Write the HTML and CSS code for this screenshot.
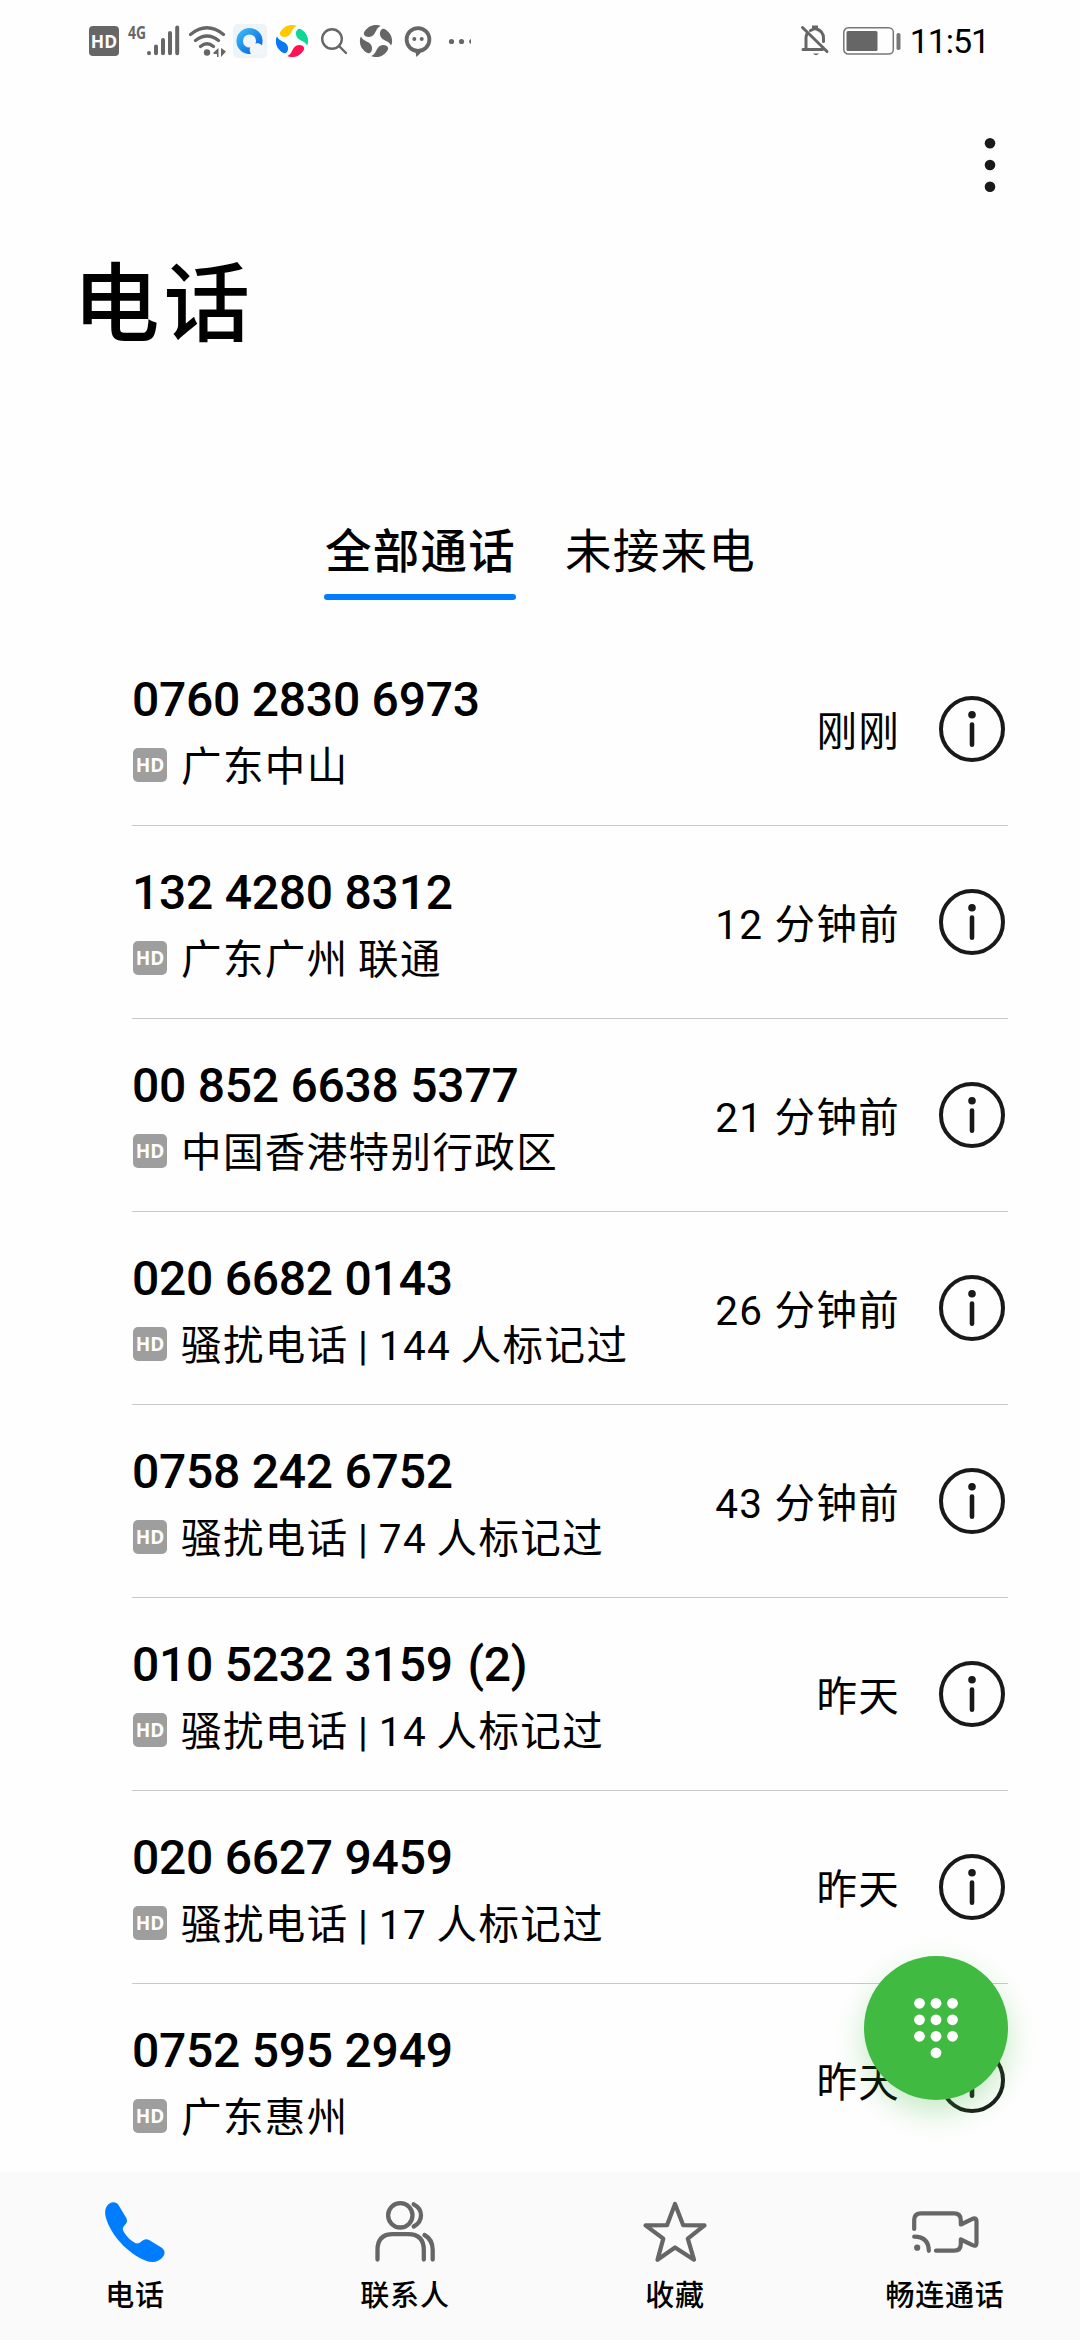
FILE: index.html
```html
<!DOCTYPE html>
<html lang="zh-CN">
<head>
  <meta charset="UTF-8" />
  <meta name="viewport" content="width=device-width, initial-scale=1.0"/>
  <title>电话</title>
  <link rel="stylesheet" href="styles.css">
</head>
<body>
  <!-- Shared icons -->
  <svg class="sprite" width="0" height="0">
    <symbol id="info" viewBox="0 0 72 72">
      <circle cx="36" cy="36" r="31" fill="none" stroke="#191919" stroke-width="4"/>
      <circle cx="36" cy="21.7" r="3.8" fill="#191919"/>
      <path d="M36 31.5v20.3" stroke="#191919" stroke-width="4.6" stroke-linecap="round"/>
    </symbol>
    <path id="petal" d="M5.500 7.500C8.500 3 12.500 .9 16.800 .9C18.800 .9 20.500 1.200 21.600 2C17.800 3.800 17.500 6.500 15.300 10C13.500 12.800 9.500 14 6.600 12.300C4.600 11.200 4.400 9.200 5.500 7.500Z"/>
  </svg>

  <div class="phone">
    <header class="status-bar">
      <div class="status-left">
        <span class="cell"><span class="hd-dark">HD</span></span>
        <span class="cell signal">
          <span class="net">4G</span>
          <svg width="34" height="34" viewBox="0 0 34 34" stroke="#666" stroke-width="4" stroke-linecap="round">
            <path d="M3 29v.2M10 22.500v6.700M17 16v13.200M24 9v20.200M31.200 3.500v25.700"/>
          </svg>
        </span>
        <span class="cell">
          <svg width="40" height="34" viewBox="0 0 40 34" fill="none" stroke="#666" stroke-width="3.200" stroke-linecap="round">
            <path d="M2.500 10.500Q19 -3 35.500 10.500M7.500 16.500Q19 7.500 30.500 16.500M12.500 22.500Q19 17 25.500 22.500"/>
            <circle cx="19" cy="28.500" r="3.200" fill="#666" stroke="none"/>
            <path d="M30.500 24v9h-1.500v-3h-3.500v-1.500zM33 24v9l5-5.500z" fill="#666" stroke="none"/>
          </svg>
        </span>
        <span class="cell">
          <svg width="34" height="34" viewBox="0 0 34 34">
            <defs>
              <linearGradient id="qblue" x1="0" y1="0" x2="1" y2="1">
                <stop offset="0" stop-color="#38b5f5"/>
                <stop offset="1" stop-color="#0865dc"/>
              </linearGradient>
            </defs>
            <rect width="34" height="34" rx="5" fill="#eef3f7"/>
            <circle cx="16.500" cy="17" r="9.800" fill="#f1f6fb" stroke="url(#qblue)" stroke-width="6.500"/>
            <path d="M20 31a5.300 5.300 0 0 1 .5-10a5.500 5.500 0 0 1 9 1.500a4.200 4.200 0 0 1 0 8.500z" fill="#f1f6fb"/>
          </svg>
        </span>
        <span class="cell">
          <svg width="34" height="34" viewBox="0 0 34 34">
            <use href="#petal" fill="#ffc800"/>
            <use href="#petal" fill="#0fd896" transform="rotate(90 17 17)"/>
            <use href="#petal" fill="#ff1155" transform="rotate(180 17 17)"/>
            <use href="#petal" fill="#0878f5" transform="rotate(270 17 17)"/>
          </svg>
        </span>
        <span class="cell">
          <svg width="34" height="34" viewBox="0 0 34 34" fill="none" stroke="#666" stroke-width="2.400" stroke-linecap="round">
            <circle cx="15" cy="15" r="9.800"/>
            <path d="M22.500 22.500l6.500 6.500"/>
          </svg>
        </span>
        <span class="cell">
          <svg width="34" height="34" viewBox="0 0 34 34" fill="#666">
            <use href="#petal"/>
            <use href="#petal" transform="rotate(90 17 17)"/>
            <use href="#petal" transform="rotate(180 17 17)"/>
            <use href="#petal" transform="rotate(270 17 17)"/>
          </svg>
        </span>
        <span class="cell">
          <svg width="34" height="34" viewBox="0 0 34 34" fill="#666">
            <circle cx="17" cy="15.500" r="11.400" fill="none" stroke="#666" stroke-width="3.800"/>
            <path d="M14.500 27l.8 6q4-2.500 5.500-6.500z"/>
            <circle cx="13.300" cy="15" r="2"/>
            <circle cx="20.700" cy="15" r="2"/>
          </svg>
        </span>
        <span class="cell">
          <svg width="24" height="34" viewBox="0 0 24 34" fill="#666">
            <circle cx="3.500" cy="17.500" r="2.600"/>
            <circle cx="13.500" cy="17.500" r="2.600"/>
            <path d="M23 15a2.600 2.600 0 0 0 0 5z"/>
          </svg>
        </span>
      </div>
      <div class="status-right">
        <svg width="32" height="34" viewBox="0 0 32 34" fill="none" stroke="#666" stroke-width="3" stroke-linecap="round">
          <path d="M3.500 3.500L28 27.500"/>
          <path d="M4 25.500h19.500M7 25V13.500q0-1.500 1-3.500M11.500 6.500q2-1 3-1.500v-2h3v2q7 2 7 9.500v3"/>
          <path d="M14 29.500h6q-3 3.500-6 0z" fill="#666" stroke="none"/>
        </svg>
        <svg class="battery" width="58" height="28" viewBox="0 0 58 28">
          <rect x=".8" y=".8" width="49.500" height="26.200" rx="4.500" fill="none" stroke="#777" stroke-width="1.500"/>
          <rect x="3.500" y="4" width="31" height="20" rx="1.500" fill="#666"/>
          <rect x="53.500" y="6" width="4" height="17" rx="1.800" fill="#777"/>
        </svg>
        <span class="clock">11:51</span>
      </div>
    </header>

    <div class="toolbar">
      <svg width="12" height="56" viewBox="0 0 12 56" fill="#191919">
        <circle cx="6" cy="6.300" r="5.300"/>
        <circle cx="6" cy="28" r="5.300"/>
        <circle cx="6" cy="49.700" r="5.300"/>
      </svg>
    </div>

    <h1>电话</h1>

    <div class="tabs">
      <div class="tab active">全部通话</div>
      <div class="tab">未接来电</div>
    </div>

    <main class="call-list">
      <div class="call">
        <div class="caller">
          <div class="number">0760 2830 6973</div>
          <div class="detail"><span class="hd">HD</span>广东中山</div>
        </div>
        <div class="time">刚刚</div>
        <svg class="info"><use href="#info"/></svg>
      </div>
      <div class="call">
        <div class="caller">
          <div class="number">132 4280 8312</div>
          <div class="detail"><span class="hd">HD</span>广东广州 联通</div>
        </div>
        <div class="time">12 分钟前</div>
        <svg class="info"><use href="#info"/></svg>
      </div>
      <div class="call">
        <div class="caller">
          <div class="number">00 852 6638 5377</div>
          <div class="detail"><span class="hd">HD</span>中国香港特别行政区</div>
        </div>
        <div class="time">21 分钟前</div>
        <svg class="info"><use href="#info"/></svg>
      </div>
      <div class="call">
        <div class="caller">
          <div class="number">020 6682 0143</div>
          <div class="detail"><span class="hd">HD</span>骚扰电话 | 144 人标记过</div>
        </div>
        <div class="time">26 分钟前</div>
        <svg class="info"><use href="#info"/></svg>
      </div>
      <div class="call">
        <div class="caller">
          <div class="number">0758 242 6752</div>
          <div class="detail"><span class="hd">HD</span>骚扰电话 | 74 人标记过</div>
        </div>
        <div class="time">43 分钟前</div>
        <svg class="info"><use href="#info"/></svg>
      </div>
      <div class="call">
        <div class="caller">
          <div class="number">010 5232 3159 <span class="count">(2)</span></div>
          <div class="detail"><span class="hd">HD</span>骚扰电话 | 14 人标记过</div>
        </div>
        <div class="time">昨天</div>
        <svg class="info"><use href="#info"/></svg>
      </div>
      <div class="call">
        <div class="caller">
          <div class="number">020 6627 9459</div>
          <div class="detail"><span class="hd">HD</span>骚扰电话 | 17 人标记过</div>
        </div>
        <div class="time">昨天</div>
        <svg class="info"><use href="#info"/></svg>
      </div>
      <div class="call">
        <div class="caller">
          <div class="number">0752 595 2949</div>
          <div class="detail"><span class="hd">HD</span>广东惠州</div>
        </div>
        <div class="time">昨天</div>
        <svg class="info"><use href="#info"/></svg>
      </div>
    </main>

    <!-- Dial pad button -->
    <button class="fab">
      <svg width="144" height="144" viewBox="0 0 144 144" fill="#fff">
        <circle cx="55.500" cy="47.300" r="5.400"/>
        <circle cx="72" cy="47.300" r="5.400"/>
        <circle cx="88.500" cy="47.300" r="5.400"/>
        <circle cx="55.500" cy="63.800" r="5.400"/>
        <circle cx="72" cy="63.800" r="5.400"/>
        <circle cx="88.500" cy="63.800" r="5.400"/>
        <circle cx="55.500" cy="80.300" r="5.400"/>
        <circle cx="72" cy="80.300" r="5.400"/>
        <circle cx="88.500" cy="80.300" r="5.400"/>
        <circle cx="72" cy="96.800" r="5.400"/>
      </svg>
    </button>

    <nav class="bottom-nav">
      <div class="nav-item">
        <svg width="72" height="72" viewBox="0 0 72 72" fill="#007dff">
          <path d="M10.500 7.500C13.500 5.500 17.500 5.700 19.500 9L27.300 22C29 25 27.500 27.500 25 30C23.300 31.700 23.500 34 25 36.300C28 41 31.500 44.500 35.700 46.800C38 48 40 47.500 42 45.800C44.500 43.300 47.500 42.500 50 44L62 51.200C65.800 53.500 66.500 57 64.500 60C60.500 66 53.500 67.500 47 64.800C28 57 12 39 7 22C5.300 16 6 10.500 10.500 7.500Z"/>
        </svg>
        <span>电话</span>
      </div>
      <div class="nav-item">
        <svg width="72" height="72" viewBox="0 0 72 72" fill="none" stroke="#666" stroke-width="4.300" stroke-linecap="round">
          <circle cx="31.300" cy="19.300" r="12.200"/>
          <path d="M44.700 8.300Q52 12 52 19.300T44.700 30.500"/>
          <path d="M8.500 63.500V54Q8.500 38.200 24 38.200H39Q54.800 38.200 54.800 54V63.500M55.500 39Q63.700 43.500 63.700 54V63.500"/>
        </svg>
        <span>联系人</span>
      </div>
      <div class="nav-item">
        <svg width="72" height="72" viewBox="0 0 72 72" fill="none" stroke="#666" stroke-width="4.200" stroke-linejoin="round">
          <path d="M36 8L44.200 29.200L65.500 29.400L48.800 42.600L55 63.700L36 51.500L18.500 63.700L24.300 42.600L6.500 29.400L28 29.200Z"/>
        </svg>
        <span>收藏</span>
      </div>
      <div class="nav-item">
        <svg width="72" height="72" viewBox="0 0 72 72" fill="none" stroke="#666" stroke-width="4.200" stroke-linecap="round" stroke-linejoin="round">
          <path d="M5.200 33V24Q5.200 17.300 12 17.300H45Q51.800 17.300 51.800 24V28.500L63.500 22.800Q67.500 21.300 67.500 25V47Q67.500 51 63.500 49.200L51.800 43.500V48Q51.800 54.700 45 54.700H27"/>
          <path d="M5.200 40.700Q19.500 40.700 19.800 54.800"/>
          <circle cx="8.200" cy="51.700" r="3.100" fill="#666" stroke="none"/>
        </svg>
        <span>畅连通话</span>
      </div>
    </nav>
  </div>
</body>
</html>
```
FILE: styles.css
```css
* {
  box-sizing: border-box;
  margin: 0;
  padding: 0;
}

body {
  font-family: Roboto, 'Noto Sans CJK SC', sans-serif;
  background: #fefefe;
  color: #000;
}

svg {
  display: block;
  flex-shrink: 0;
}

.sprite {
  position: absolute;
}

.phone {
  position: relative;
  display: flex;
  flex-direction: column;
  width: 1080px;
  height: 2340px;
  overflow: hidden;
}

/* status bar */
.status-bar {
  display: flex;
  justify-content: space-between;
  align-items: center;
  height: 82px;
  padding: 0 91px 0 83px;
}

.status-left,
.status-right {
  display: flex;
  align-items: center;
}

.cell {
  display: flex;
  justify-content: center;
  align-items: center;
  width: 42px;
}

.hd-dark,
.hd {
  display: flex;
  justify-content: center;
  align-items: center;
  color: #fff;
  font-family: 'Open Sans', sans-serif;
  font-weight: 700;
  letter-spacing: 0;
}

.hd-dark {
  width: 30px;
  height: 30px;
  border-radius: 4px;
  background: #666;
  font-size: 17.5px;
}

.signal {
  width: 62px;
  align-items: flex-start;
  justify-content: flex-end;
  padding-right: 7px;
}

.net {
  color: #666;
  font-family: 'Open Sans', sans-serif;
  font-size: 18.5px;
  font-weight: 700;
  line-height: 15px;
  transform: scaleX(0.75);
  transform-origin: right;
}

.battery {
  margin: 0 9px 0 12px;
}

.clock {
  font-size: 34px;
  letter-spacing: -1.1px;
  line-height: 40px;
}

/* header */
.toolbar {
  display: flex;
  justify-content: flex-end;
  align-items: center;
  height: 166px;
  padding-right: 84px;
}

h1 {
  height: 110px;
  padding: 3px 0 0 73px;
  font-size: 86.5px;
  font-weight: 500;
  letter-spacing: 4px;
  line-height: 110px;
}

.tabs {
  display: flex;
  justify-content: center;
  gap: 48px;
  height: 102px;
  margin-top: 142px;
}

.tab {
  padding-left: 1px;
  font-size: 46.5px;
  letter-spacing: 1.25px;
  line-height: 104px;
}

.tab.active {
  font-weight: 500;
}

.tab.active::after {
  content: '';
  display: block;
  height: 6px;
  margin: -10px 0 0 -1px;
  border-radius: 3px;
  background: #007dff;
}

/* call log */
.call-list {
  flex: 1;
  margin-top: 31px;
  padding: 0 72px 0 132px;
  overflow: hidden;
}

.call {
  display: flex;
  align-items: center;
  height: 193px;
  border-bottom: 1px solid #c9c9c9;
}

.caller {
  flex: 1;
  padding-top: 7px;
}

.number {
  font-size: 48px;
  font-weight: 500;
  letter-spacing: -0.25px;
  line-height: 68px;
}

.count {
  margin-left: 3px;
}

.detail {
  display: flex;
  align-items: center;
  font-size: 40.5px;
  letter-spacing: 1.4px;
  word-spacing: -2px;
  line-height: 66px;
  white-space: pre;
}

.hd {
  width: 34px;
  height: 34px;
  margin: 0 14px 3px 1px;
  border-radius: 5px;
  background: #9e9e9e;
  font-size: 19px;
}

.time {
  padding-bottom: 2px;
  font-size: 40.5px;
  letter-spacing: 1.3px;
}

.info {
  width: 72px;
  height: 72px;
  margin-left: 36px;
}

/* floating button */
.fab {
  position: absolute;
  right: 72px;
  bottom: 240px;
  width: 144px;
  height: 144px;
  border: none;
  border-radius: 50%;
  background: #41ba41;
  box-shadow: 0 12px 30px rgba(65, 186, 65, 0.3);
}

/* bottom navigation */
.bottom-nav {
  display: flex;
  height: 168px;
  background: #fafafa;
}

.nav-item {
  flex: 1;
  display: flex;
  flex-direction: column;
  align-items: center;
  padding-top: 24px;
  font-size: 29px;
  font-weight: 500;
  letter-spacing: 0.8px;
  line-height: 57px;
}
```
